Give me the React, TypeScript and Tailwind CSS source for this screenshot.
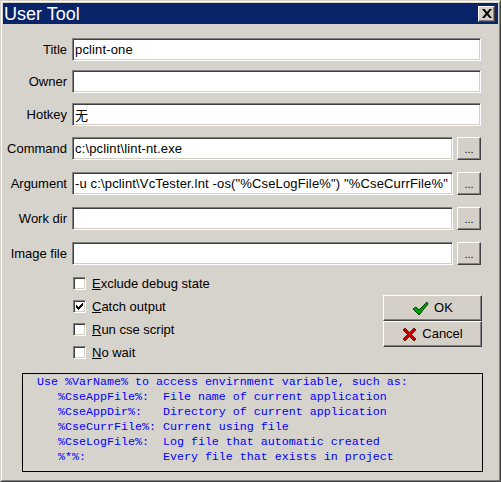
import React from 'react';

const sunken =
  'border border-t-[#808080] border-l-[#808080] border-r-white border-b-white shadow-[inset_1px_1px_0_#404040,inset_-1px_-1px_0_#d4d0c8]';
const raised =
  'border border-t-white border-l-white border-r-[#404040] border-b-[#404040] shadow-[inset_-1px_-1px_0_#808080,inset_1px_1px_0_#d4d0c8]';

interface RowProps {
  label: string;
  value?: string;
  browse?: boolean;
  mt: string;
  cjk?: boolean;
}

const FieldRow: React.FC<RowProps> = ({ label, value = '', browse, mt, cjk }) => (
  <div className={`flex items-center h-[23px] ${mt}`}>
    <div className="w-[65px] text-right pr-px">{label}</div>
    <div
      className={`ml-[4px] h-[23px] bg-white ${sunken} flex items-center pl-[2px] overflow-hidden whitespace-nowrap tracking-[0.15px] ${
        browse ? 'w-[381px]' : 'w-[409px]'
      }`}
      style={cjk ? { fontFamily: '"Noto Sans CJK SC", "Liberation Sans", sans-serif' } : undefined}
    >
      {value}
    </div>
    {browse && (
      <button className={`ml-[4px] w-[24px] h-[23px] bg-[#d4d0c8] ${raised} flex items-end justify-center pb-[4px] text-[11px] leading-none`}>
        ...
      </button>
    )}
  </div>
);

const CheckRow: React.FC<{ first: string; rest: string; checked?: boolean }> = ({ first, rest, checked }) => (
  <div className="flex items-center h-[23px]">
    <div className={`w-[13px] h-[13px] bg-white ${sunken} flex items-center justify-center`}>
      {checked && (
        <svg width="7" height="7" viewBox="0 0 7 7">
          <path d="M0 2h1v1h1v1h1V3h1V2h1V1h1V0h1v3H6v1H5v1H4v1H3v1H2V6H1V5H0z" fill="#000" />
        </svg>
      )}
    </div>
    <span className="ml-[6px]">
      <u>{first}</u>
      {rest}
    </span>
  </div>
);

export default function App() {
  return (
    <div className="w-[501px] h-[482px] bg-[#d6d3cc] border border-t-[#d4d0c8] border-l-[#d4d0c8] border-r-[#404040] border-b-[#404040] text-[13px] text-black font-['Liberation_Sans',Arial,sans-serif]">
      <div className="h-full border border-t-white border-l-white border-r-[#808080] border-b-[#808080] p-px flex flex-col">
        {/* title bar */}
        <div className="h-[21px] bg-[#0a246a] flex items-center justify-between pl-[1px] pr-[3px]">
          <span className="text-white text-[18px] leading-none">User Tool</span>
          <button className={`w-[17px] h-[16px] bg-[#d4d0c8] ${raised} flex items-center justify-center`}>
            <svg width="10" height="9" viewBox="0 0 10 9">
              <path d="M0 0h2.5l2.5 3 2.5-3H10L6.4 4.5 10 9H7.5L5 6 2.5 9H0l3.6-4.5z" fill="#000" />
            </svg>
          </button>
        </div>

        <FieldRow label="Title" value="pclint-one" mt="mt-[14px]" />
        <FieldRow label="Owner" mt="mt-[9px]" />
        <FieldRow label="Hotkey" value="无" mt="mt-[10px]" cjk />
        <FieldRow label="Command" value="c:\pclint\lint-nt.exe" browse mt="mt-[11px]" />
        <FieldRow
          label="Argument"
          value={'-u c:\\pclint\\VcTester.lnt -os("%CseLogFile%") "%CseCurrFile%"'}
          browse
          mt="mt-[12px]"
        />
        <FieldRow label="Work dir" browse mt="mt-[12px]" />
        <FieldRow label="Image file" browse mt="mt-[12px]" />

        {/* options + buttons */}
        <div className="flex mt-[7px]">
          <div className="pl-[70px] flex flex-col">
            <CheckRow first="E" rest="xclude debug state" />
            <CheckRow first="C" rest="atch output" checked />
            <CheckRow first="R" rest="un cse script" />
            <CheckRow first="N" rest="o wait" />
          </div>
          <div className="ml-auto mr-[16px] mt-[23px] flex flex-col">
            <button className={`w-[99px] h-[26px] bg-[#d4d0c8] ${raised} flex items-center justify-center gap-[5px]`}>
              <svg width="17" height="15" viewBox="0 0 17 15">
                <path d="M1 8l3-2 3 3 8-8 1 2-9 11z" fill="#00a000" stroke="#004000" strokeWidth="1" strokeLinejoin="round" />
              </svg>
              <span>OK</span>
            </button>
            <button className={`w-[99px] h-[26px] bg-[#d4d0c8] ${raised} flex items-center justify-center gap-[5px]`}>
              <svg width="15" height="15" viewBox="0 0 15 15">
                <path d="M1 3l2-2 4.5 4.5L12 1l2 2-4.5 4.5L14 12l-2 2-4.5-4.5L3 14l-2-2 4.5-4.5z" fill="#c00000" stroke="#600000" strokeWidth="0.8" strokeLinejoin="round" />
              </svg>
              <span>Cancel</span>
            </button>
          </div>
        </div>

        {/* info */}
        <div className="ml-[19px] mt-[9px] w-[461px] h-[99px] border border-black pl-[14px] pt-px">
          <pre className="text-[#0000ff] font-['Liberation_Mono','Courier_New',monospace] text-[11.67px] leading-[15px]">
{`Use %VarName% to access envirnment variable, such as:
   %CseAppFile%:  File name of current application
   %CseAppDir%:   Directory of current application
   %CseCurrFile%: Current using file
   %CseLogFile%:  Log file that automatic created
   %*%:           Every file that exists in project`}
          </pre>
        </div>
      </div>
    </div>
  );
}
